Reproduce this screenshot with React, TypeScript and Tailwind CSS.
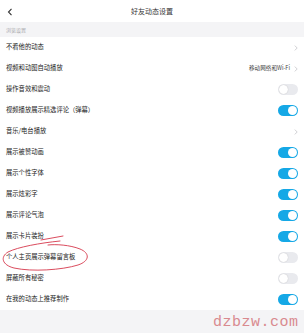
import React from "react";

const font = { fontFamily: '"Noto Sans CJK SC", "Noto Sans", sans-serif' };

function Toggle({ on }: { on: boolean }) {
  return on ? (
    <div className="w-[20px] h-[11px] rounded-full bg-[#15a8e6] flex items-center justify-end pr-[1px]">
      <div className="w-[9px] h-[9px] rounded-full bg-white" />
    </div>
  ) : (
    <div className="w-[20px] h-[11px] rounded-full bg-[#e9eaee] flex items-center justify-start pl-[1px]">
      <div className="w-[9px] h-[9px] rounded-full bg-white shadow-[0_0_1px_rgba(0,0,0,0.25)]" />
    </div>
  );
}

function Chevron() {
  return (
    <svg width="4" height="6" viewBox="0 0 4 6" className="ml-[4px]">
      <path d="M0.8 0.6 L3.2 3 L0.8 5.4" fill="none" stroke="#c4c4c8" strokeWidth="0.8" />
    </svg>
  );
}

type Row = { label: string; right: "chev" | "on" | "off"; value?: string };

const rows: Row[] = [
  { label: "不看他的动态", right: "chev" },
  { label: "视频和动图自动播放", right: "chev", value: "移动网络和Wi-Fi" },
  { label: "操作音效和震动", right: "off" },
  { label: "视频播放展示精选评论（弹幕）", right: "on" },
  { label: "音乐/电台播放", right: "chev" },
  { label: "展示被赞动画", right: "on" },
  { label: "展示个性字体", right: "on" },
  { label: "展示炫彩字", right: "on" },
  { label: "展示评论气泡", right: "on" },
  { label: "展示卡片装扮", right: "on" },
  { label: "个人主页展示弹幕留言板", right: "off" },
  { label: "屏蔽所有秘密", right: "off" },
  { label: "在我的动态上推荐制作", right: "on" },
];

export default function App() {
  return (
    <div className="relative w-[304px] h-[333px] bg-[#f4f4f6] overflow-hidden" style={font}>
      <div className="h-[22px] bg-white flex items-center relative">
        <svg width="6" height="8" viewBox="0 0 6 8" className="absolute left-[7px] top-[8px]">
          <path d="M4.5 0.8 L1.5 4 L4.5 7.2" fill="none" stroke="#333" strokeWidth="1.1" />
        </svg>
        <div className="w-full text-center text-[7px] text-[#333] leading-none">好友动态设置</div>
      </div>
      <div className="h-[15px] flex items-center pl-[6px] text-[5px] text-[#a9a9ad]">浏览设置</div>
      <div className="bg-white">
        {rows.map((r, i) => (
          <div key={i} className="h-[21px] flex items-center justify-between pl-[6px] pr-[6px]">
            <span className="text-[6.3px] text-[#222] leading-none">{r.label}</span>
            {r.right === "chev" ? (
              <div className="flex items-center">
                {r.value && <span className="text-[5.6px] text-[#444] leading-none">{r.value}</span>}
                <Chevron />
              </div>
            ) : (
              <Toggle on={r.right === "on"} />
            )}
          </div>
        ))}
      </div>
      <svg className="absolute left-0 top-0 pointer-events-none" width="304" height="333" viewBox="0 0 304 333">
        <path
          d="M41 240 C48 239 56 237 63 236 M60 241 C40 243 18 247 8 252 C0 257 2 265 14 268 C32 272 62 270 78 265 C90 261 90 253 80 249 C70 245 56 244 48 245"
          fill="none"
          stroke="#d6384c"
          strokeWidth="0.9"
          strokeLinecap="round"
        />
      </svg>
      <div
        className="absolute left-[213px] top-[315px] text-[15px] text-[#d98a8f] leading-none tracking-[0.5px]"
        style={{ fontFamily: '"Liberation Mono", "DejaVu Sans Mono", monospace' }}
      >
        dzbzw.com
      </div>
    </div>
  );
}
